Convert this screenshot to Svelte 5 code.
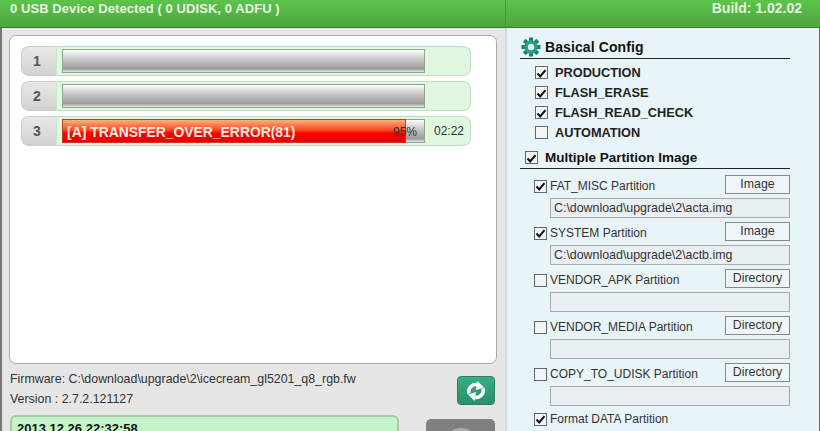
<script>
  let rows = [
    { n: 1, width: 0, label: "", pct: "", time: "" },
    { n: 2, width: 0, label: "", pct: "", time: "" },
    { n: 3, width: 344, label: "[A] TRANSFER_OVER_ERROR(81)", pct: "95%", time: "02:22" }
  ];
  let basics = [
    { label: "PRODUCTION", on: true },
    { label: "FLASH_ERASE", on: true },
    { label: "FLASH_READ_CHECK", on: true },
    { label: "AUTOMATION", on: false }
  ];
  let partitions = [
    { label: "FAT_MISC Partition", on: true, btn: "Image", path: "C:\\download\\upgrade\\2\\acta.img" },
    { label: "SYSTEM Partition", on: true, btn: "Image", path: "C:\\download\\upgrade\\2\\actb.img" },
    { label: "VENDOR_APK Partition", on: false, btn: "Directory", path: "" },
    { label: "VENDOR_MEDIA Partition", on: false, btn: "Directory", path: "" },
    { label: "COPY_TO_UDISK Partition", on: false, btn: "Directory", path: "" }
  ];
  let teeth = [0, 45, 90, 135, 180, 225, 270, 315];
</script>

{#snippet check(on)}
  <span class="check">
    {#if on}
      <svg width="11" height="11" viewBox="0 0 11 11"><path d="M1.5 5.5 L4.2 8.5 L9.5 2.2" fill="none" stroke="#111" stroke-width="2" /></svg>
    {/if}
  </span>
{/snippet}

<div class="app">
  <header>
    <span class="detected">0 USB Device Detected ( 0 UDISK, 0 ADFU )</span>
    <span class="build">Build: 1.02.02</span>
  </header>
  <div class="main">
    <section class="left">
      <div class="panel">
        {#each rows as r}
          <div class="row">
            <div class="num">{r.n}</div>
            <div class="body">
              <div class="bar">
                {#if r.width}
                  <div class="fill" style="width:{r.width}px"></div>
                  <span class="label">{r.label}</span>
                  <span class="pct">{r.pct}</span>
                {/if}
              </div>
              <span class="time">{r.time}</span>
            </div>
          </div>
        {/each}
      </div>
      <div class="info">
        <div class="lines">
          <div>Firmware: C:\download\upgrade\2\icecream_gl5201_q8_rgb.fw</div>
          <div>Version : 2.7.2.121127</div>
        </div>
        <button class="refresh" aria-label="refresh">
          <svg width="22" height="22" viewBox="0 0 22 22">
            <path d="M4 13.5 A7 7 0 0 1 13.5 5.2 M18 8.5 A7 7 0 0 1 8.5 16.8" fill="none" stroke="#fff" stroke-width="3.6" />
            <path d="M12.5 1 L19 7.5 L11 10 Z M9.5 21 L3 14.5 L11 12 Z" fill="#fff" />
          </svg>
        </button>
      </div>
      <div class="bottom">
        <div class="log">2013 12 26 22:32:58</div>
        <div class="start"><div class="knob"></div></div>
      </div>
    </section>
    <aside class="right">
      <div class="title">
        <svg class="gear" width="20" height="20" viewBox="0 0 20 20">
          {#each teeth as t}
            <rect x="8" y="0.5" width="4" height="5" fill="#1c7f70" transform="rotate({t} 10 10)" />
          {/each}
          <circle cx="10" cy="10" r="6.8" fill="#27a08a" />
          <circle cx="10" cy="10" r="3.2" fill="#dff2ee" />
        </svg>
        Basical Config
      </div>
      <div class="basics">
        {#each basics as b}
          <div class="basic">{@render check(b.on)}{b.label}</div>
        {/each}
      </div>
      <div class="title multi">{@render check(true)}Multiple Partition Image</div>
      <div class="parts">
        {#each partitions as p}
          <div class="part">
            <div class="part-head">
              {@render check(p.on)}
              <span class="part-name">{p.label}</span>
              <span class="btn">{p.btn}</span>
            </div>
            <div class="path">{p.path}</div>
          </div>
        {/each}
        <div class="part-head last">
          {@render check(true)}
          <span class="part-name">Format DATA Partition</span>
        </div>
      </div>
    </aside>
  </div>
</div>

<style>
  :global(body) {
    margin: 0;
    overflow: hidden;
  }
  .app {
    width: 820px;
    height: 431px;
    overflow: hidden;
    font-family: "Liberation Sans", Arial, sans-serif;
    background: #e6e6e6;
  }
  header {
    height: 28px;
    box-sizing: border-box;
    display: flex;
    background: linear-gradient(#5cc44b, #4ea63e);
    border-bottom: 1px solid #3f7a36;
    color: #e6f5df;
    font-weight: bold;
    line-height: 17px;
  }
  .detected {
    width: 506px;
    box-sizing: border-box;
    padding-left: 10px;
    border-right: 1px solid #479a3a;
    font-size: 13px;
    letter-spacing: 0.07px;
  }
  .build {
    flex: 1;
    padding-right: 18px;
    text-align: right;
    font-size: 14px;
  }
  .main {
    display: flex;
    height: 403px;
  }
  .left {
    width: 505px;
    box-sizing: border-box;
    padding: 7px 8px 0 7px;
    border-left: 2px solid #777;
  }
  .panel {
    box-sizing: border-box;
    height: 329px;
    padding: 10px 25px 0 11px;
    background: #fff;
    border: 1px solid #aaa;
    border-radius: 7px;
    display: flex;
    flex-direction: column;
    gap: 5px;
  }
  .row {
    display: flex;
    height: 30px;
  }
  .num {
    width: 35px;
    box-sizing: border-box;
    padding-right: 4px;
    text-align: center;
    background: linear-gradient(#e8e8e8, #d2d2d2);
    border: 1px solid #ccc;
    border-right: 0;
    border-radius: 8px 0 0 8px;
    color: #555;
    font-size: 14px;
    font-weight: bold;
    line-height: 29px;
  }
  .body {
    flex: 1;
    box-sizing: border-box;
    padding: 2px 0 0 5px;
    background: #dff8df;
    border: 1px solid #c4dcc4;
    border-left: 1px solid #c4e8c4;
    border-radius: 0 8px 8px 0;
    display: flex;
  }
  .bar {
    position: relative;
    width: 363px;
    height: 24px;
    box-sizing: border-box;
    border: 1px solid #8fa58f;
    background: linear-gradient(#fbfbfb, #c4c4c4 45%, #9c9c9c 85%, #e8e8e8);
  }
  .fill {
    position: absolute;
    left: -1px;
    top: -1px;
    height: 24px;
    box-sizing: border-box;
    border: 1px solid #c8382a;
    background: linear-gradient(#ffb080, #ff4a20 45%, #ff0000 60%, #e80000);
  }
  .label {
    position: absolute;
    left: 4px;
    top: 5px;
    color: #fbe9e0;
    font-size: 13.9px;
    font-weight: bold;
    line-height: 15px;
  }
  .pct {
    position: absolute;
    left: 330px;
    top: 5px;
    color: #333;
    font-size: 12px;
    line-height: 15px;
  }
  .time {
    margin: 5px 0 0 9px;
    color: #333;
    font-size: 12px;
    line-height: 15px;
  }
  .info {
    display: flex;
    justify-content: space-between;
    padding: 5px 2px 0 0;
    color: #333;
    font-size: 12.4px;
    line-height: 20px;
  }
  .lines {
    padding-left: 1px;
  }
  .refresh {
    width: 38px;
    height: 29px;
    margin-top: 7px;
    padding: 0;
    border: 1px solid #2c7f60;
    border-radius: 4px;
    background: linear-gradient(#36b083, #2a9068);
    display: grid;
    place-items: center;
  }
  .bottom {
    display: flex;
    justify-content: space-between;
    margin-top: 2px;
  }
  .log {
    width: 389px;
    height: 40px;
    box-sizing: border-box;
    padding: 4px 5px;
    margin: 4px 0 0 1px;
    background: #c4f4c8;
    border: 2px solid #a8c8a8;
    border-bottom: 0;
    border-radius: 6px 6px 0 0;
    color: #111;
    font-size: 13px;
    font-weight: bold;
    line-height: 15px;
  }
  .start {
    width: 69px;
    height: 40px;
    margin: 8px 2px 0 0;
    background: #808080;
    border-radius: 5px 5px 0 0;
    display: flex;
    justify-content: center;
  }
  .knob {
    width: 34px;
    height: 34px;
    margin-top: 9px;
    border-radius: 50%;
    background: #aaa;
  }
  .right {
    flex: 1;
    box-sizing: border-box;
    padding: 7px 29px 0 13px;
    background: #e9f4f8;
    border-left: 2px solid #cfdbe2;
    border-right: 1px solid #666;
    color: #111;
  }
  .title {
    display: flex;
    align-items: center;
    gap: 4px;
    height: 23px;
    border-bottom: 1px solid #222;
    font-size: 14px;
    letter-spacing: 0.1px;
    font-weight: bold;
  }
  .gear {
    margin-left: 1px;
  }
  .basics {
    padding: 3px 0 0 15px;
  }
  .basic {
    display: flex;
    align-items: center;
    gap: 7px;
    height: 20px;
    font-size: 12.75px;
    font-weight: bold;
    color: #222;
  }
  .multi {
    margin-top: 4px;
    height: 22px;
    padding-left: 5px;
    font-size: 13.5px;
    letter-spacing: 0;
    gap: 7px;
  }
  .check {
    width: 11px;
    height: 11px;
    flex: none;
    border: 1px solid #5a6a78;
    background: #f4f4f4;
    display: block;
  }
  .parts {
    padding: 7px 0 0 14px;
  }
  .part {
    height: 47px;
  }
  .part-head {
    display: flex;
    align-items: center;
    height: 20px;
    font-size: 12px;
    color: #333;
  }
  .part-head.last {
    margin-top: -2px;
  }
  .part-name {
    flex: 1;
    margin-left: 3px;
  }
  .btn {
    width: 65px;
    height: 19px;
    margin-top: -3px;
    box-sizing: border-box;
    border: 1px solid #888;
    text-align: center;
    font-size: 12.4px;
    line-height: 16px;
    background: #eef5f8;
    color: #333;
  }
  .path {
    box-sizing: border-box;
    height: 20px;
    margin: 2px 0 0 16px;
    padding: 0 3px;
    border: 1px solid #aaa;
    background: #e8eef1;
    font-size: 12.4px;
    line-height: 18px;
    color: #333;
  }
</style>
